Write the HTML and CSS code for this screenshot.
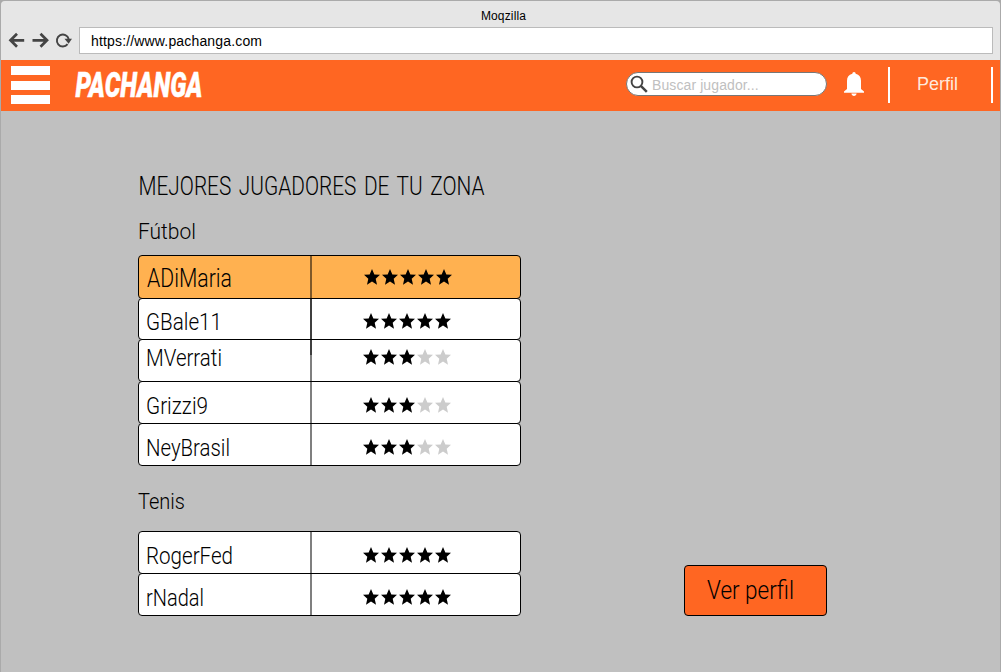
FILE: index.html
```html
<!DOCTYPE html>
<html lang="es">
<head>
<meta charset="utf-8">
<title>Pachanga</title>
<link rel="stylesheet" href="styles.css">
</head>
<body>
<svg width="0" height="0" class="defs">
  <symbol id="star" viewBox="0 0 16 16"><path d="M8 0l2.350 5.500 5.650.3-4.300 4 1.300 5.900-5-3.200-5 3.200 1.300-5.900L0 5.800l5.650-.3z"/></symbol>
  <symbol id="five" viewBox="0 0 88 16"><g fill="#000"><use href="#star" width="16" height="16"/><use href="#star" x="18" width="16" height="16"/><use href="#star" x="36" width="16" height="16"/><use href="#star" x="54" width="16" height="16"/><use href="#star" x="72" width="16" height="16"/></g></symbol>
  <symbol id="three" viewBox="0 0 88 16"><g fill="#000"><use href="#star" width="16" height="16"/><use href="#star" x="18" width="16" height="16"/><use href="#star" x="36" width="16" height="16"/></g><g fill="#ccc"><use href="#star" x="54" width="16" height="16"/><use href="#star" x="72" width="16" height="16"/></g></symbol>
</svg>
<div class="window">
  <div class="chrome">
    <div class="window-title">Moqzilla</div>
    <div class="toolbar">
      <svg class="nav" width="64" height="18" viewBox="8 31 64 18" fill="none" stroke="#444">
        <path d="M24.200 40.300H11M17 33.800l-6.500 6.500 6.500 6.500" stroke-width="2.700"/>
        <path d="M32.500 40.300H46M40.500 33.800l6.500 6.500-6.500 6.500" stroke-width="2.700"/>
        <path d="M67.600 44.200A6 6 0 1 1 68.700 39" stroke-width="1.900"/>
        <path d="M64.500 38.800h7.500l-3.400 5z" fill="#444" stroke="none"/>
      </svg>
      <div class="address">https://www.pachanga.com</div>
    </div>
  </div>
  <header class="header">
    <div class="menu"><i></i><i></i><i></i></div>
    <svg class="logo" width="132" height="51"><text x="2.500" y="37.300" textLength="127" lengthAdjust="spacingAndGlyphs">PACHANGA</text></svg>
    <div class="search">
      <svg width="18" height="18" viewBox="0 0 18 18" fill="none" stroke="#444"><circle cx="7" cy="7" r="5.400" stroke-width="1.900"/><path d="M10.800 10.800l6 6" stroke-width="2.500"/></svg>
      <span>Buscar jugador...</span>
    </div>
    <svg class="bell" width="20" height="24" viewBox="0 0 20 24" fill="#fff"><path d="M8.300 1.800a1.700 1.700 0 0 1 3.400 0c3.600.9 5.300 3.300 5.300 6.900v8.200l3 2.600v1.200H0v-1.200l3-2.600V8.700c0-3.600 1.700-6 5.300-6.900zM7.400 21.600h5.200c-.2 1.500-1.200 2.300-2.600 2.300s-2.400-.8-2.600-2.300z"/></svg>
    <div class="profile">Perfil</div>
  </header>
  <main class="main">
    <section class="ranking">
      <svg class="label title" height="40"><text x="0.500" y="29.300" textLength="346" lengthAdjust="spacingAndGlyphs">MEJORES JUGADORES DE TU ZONA</text></svg>
      <svg class="label subtitle first" height="34"><text x="0" y="23" textLength="58" lengthAdjust="spacingAndGlyphs">Fútbol</text></svg>
      <div class="table football">
        <div class="row top"><svg class="label name"><text x="8" y="30.500" textLength="85" lengthAdjust="spacingAndGlyphs">ADiMaria</text></svg><div class="rate r0"><svg width="88" height="16"><use href="#five"/></svg></div></div>
        <div class="row short"><svg class="label name"><text x="7" y="31" textLength="76" lengthAdjust="spacingAndGlyphs">GBale11</text></svg><div class="rate r1"><svg width="88" height="16"><use href="#five"/></svg></div></div>
        <div class="row"><svg class="label name"><text x="7" y="26" textLength="76" lengthAdjust="spacingAndGlyphs">MVerrati</text></svg><div class="rate r2"><svg width="88" height="16"><use href="#three"/></svg></div></div>
        <div class="row"><svg class="label name"><text x="7" y="32" textLength="62" lengthAdjust="spacingAndGlyphs">Grizzi9</text></svg><div class="rate r3"><svg width="88" height="16"><use href="#three"/></svg></div></div>
        <div class="row"><svg class="label name"><text x="7" y="32" textLength="84" lengthAdjust="spacingAndGlyphs">NeyBrasil</text></svg><div class="rate r3"><svg width="88" height="16"><use href="#three"/></svg></div></div>
      </div>
      <svg class="label subtitle second" height="34"><text x="0" y="23" textLength="47" lengthAdjust="spacingAndGlyphs">Tenis</text></svg>
      <div class="table">
        <div class="row"><svg class="label name"><text x="7" y="32" textLength="87" lengthAdjust="spacingAndGlyphs">RogerFed</text></svg><div class="rate r3"><svg width="88" height="16"><use href="#five"/></svg></div></div>
        <div class="row"><svg class="label name"><text x="7" y="32" textLength="58" lengthAdjust="spacingAndGlyphs">rNadal</text></svg><div class="rate r3"><svg width="88" height="16"><use href="#five"/></svg></div></div>
      </div>
    </section>
    <div class="button"><svg class="label" width="141" height="49"><text x="22" y="33" textLength="87" lengthAdjust="spacingAndGlyphs">Ver perfil</text></svg></div>
  </main>
</div>
</body>
</html>
```
FILE: styles.css
```css
* { box-sizing: border-box; }
body { margin: 0; width: 1001px; height: 672px; overflow: hidden; background: #aaa; font-family: "Liberation Sans", Arial, sans-serif; }
svg { display: block; flex: none; }
.defs { position: absolute; }
.window { height: 672px; border: solid #aaa; border-width: 1px 1px 0; border-radius: 5px 5px 0 0; overflow: hidden; background: #c0c0c0; }
.chrome { height: 59px; background: #e6e6e6; }
.window-title { height: 26px; padding: 8px 0 0 6px; font-size: 12px; line-height: 14px; letter-spacing: .15px; text-align: center; color: #000; }
.toolbar { display: flex; padding: 0 7px; }
.nav { margin: 4px 7px 0 0; }
.address { flex: 1; height: 27px; padding-left: 11px; border: 1px solid #bbb; background: #fff; font-size: 14px; line-height: 27px; letter-spacing: .16px; color: #000; }
.header { display: flex; height: 51px; padding-left: 10px; background: #f62; color: #fff; }
.menu { display: flex; flex-direction: column; justify-content: space-between; width: 39px; height: 38px; margin: 6px 23px 0 0; }
.menu i { height: 9px; background: #fff; }
.logo { margin-right: 421px; overflow: visible; }
.logo text { font: italic 900 35px Roboto, sans-serif; fill: #fff; stroke: #fff; stroke-width: .5px; }
.search { display: flex; width: 201px; height: 24px; margin: 12px 17px 0 0; padding: 2px 0 0 3px; gap: 4px; border: 1px solid #777; border-radius: 12px; background: #fff; color: #c0c0c0; font-size: 14px; line-height: 21px; letter-spacing: .1px; }
.bell { margin: 12px 24px 0 0; }
.profile { width: 105px; height: 36px; margin-top: 7px; border: solid #fff; border-width: 0 2px; padding-left: 27px; font-size: 18px; line-height: 35px; color: #ffe9dc; }
.main { display: flex; align-items: flex-start; padding: 55px 0 0 137px; }
.ranking { width: 383px; margin-right: 163px; }
.label { overflow: visible; font-family: Roboto, "Noto Sans", sans-serif; font-size: 23px; font-weight: 300; fill: #000; }
.title { width: 383px; font-size: 25px; word-spacing: 3px; }
.subtitle { width: 383px; font-size: 22px; }
.first { margin: 10px 0 5px; }
.second { margin: 20px 0 11px; }
.table { position: relative; }
.row { display: flex; height: 43px; margin-bottom: -1px; border: 1px solid #000; border-radius: 4px; background: #fff; }
.table .row:last-child { margin-bottom: 0; }
.top { height: 44px; background: #ffb150; }
.short { height: 42px; }
.name { width: 171px; height: 41px; }
.top .name, .button .label { font-size: 25px; }
.rate { flex: 1; border-left: 2px solid rgba(0, 0, 0, .5); padding-left: 51px; }
.r0 { padding: 13px 0 0 52px; }
.r1 { padding-top: 14px; }
.r2 { padding-top: 9px; }
.r3 { padding-top: 15px; }
.football::after { content: ""; position: absolute; left: 172px; top: 44px; width: 2px; height: 56px; background: rgba(0, 0, 0, .5); }
.button { width: 143px; height: 51px; margin-top: 399px; border: 1px solid #000; border-radius: 4px; background: #f62; }
```
